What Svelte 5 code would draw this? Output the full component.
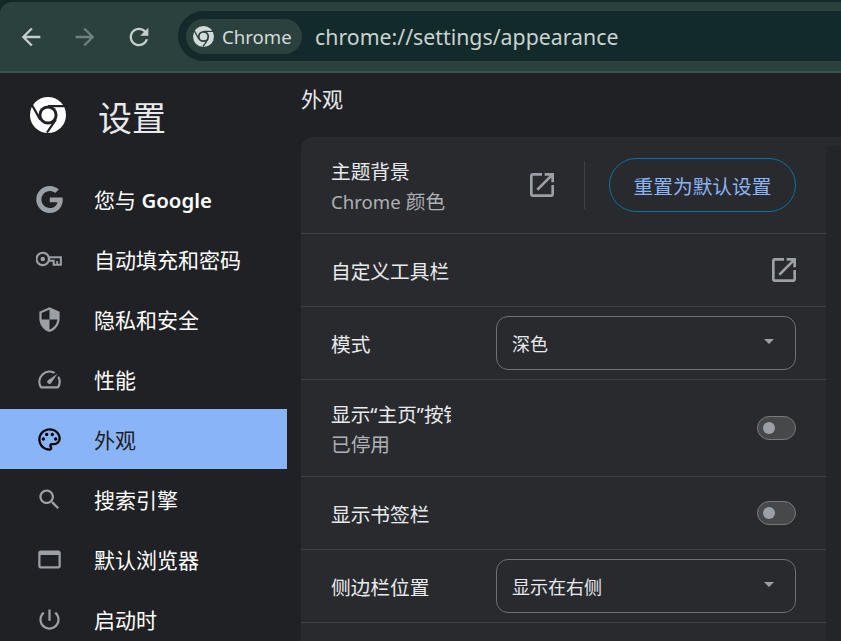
<script>
  const icons = {
    google: 'M12.24 10.285V14.4h6.806c-.275 1.765-2.056 5.174-6.806 5.174-4.095 0-7.439-3.389-7.439-7.574s3.345-7.574 7.439-7.574c2.33 0 3.891.989 4.785 1.849l3.254-3.138C18.189 1.186 15.479 0 12.24 0c-6.635 0-12 5.365-12 12s5.365 12 12 12c6.926 0 11.52-4.869 11.52-11.726 0-.788-.085-1.39-.189-1.989H12.24z',
    key: 'M6 5A6.5 6.5 0 0 1 12 9H23V17.5H14.8V14H12A6.5 6.5 0 1 1 6 5ZM6 6.9A4.6 4.6 0 1 0 6 16.1 4.6 4.6 0 1 0 6 6.9ZM6 9.5A2 2 0 1 1 6 13.5 2 2 0 1 1 6 9.5ZM12.6 10.8H21.2V15.7H19.6V13.4H18V15.7H16.6V12.2H12.6Z',
    shield: 'M12 1L3 5v6c0 5.55 3.84 10.74 9 12 5.16-1.26 9-6.45 9-12V5l-9-4zm0 10.99h7c-.53 4.12-3.28 7.79-7 8.94V12H5V6.3l7-3.11v8.8z',
    speed: 'M20.38 8.57l-1.23 1.85a8 8 0 0 1-.22 7.58H5.07A8 8 0 0 1 15.58 6.85l1.85-1.23A10 10 0 0 0 3.35 19a2 2 0 0 0 1.72 1h13.85a2 2 0 0 0 1.74-1 10 10 0 0 0-.27-10.44zm-9.79 6.84a2 2 0 0 0 2.83 0l5.66-8.49-8.49 5.66a2 2 0 0 0 0 2.83z',
    palette: 'M12 22C6.49 22 2 17.51 2 12S6.49 2 12 2s10 4.04 10 9c0 3.31-2.69 6-6 6h-1.77c-.28 0-.5.22-.5.5 0 .12.05.23.13.33.41.47.64 1.06.64 1.67 0 1.38-1.12 2.5-2.5 2.5zm0-18c-4.41 0-8 3.59-8 8s3.59 8 8 8c.28 0 .5-.22.5-.5a.54.54 0 0 0-.14-.35c-.41-.46-.63-1.05-.63-1.65 0-1.38 1.12-2.5 2.5-2.5H16c2.21 0 4-1.79 4-4 0-3.86-3.59-7-8-7zM6.5 10a1.5 1.5 0 1 0 0 3 1.5 1.5 0 0 0 0-3zm3-4a1.5 1.5 0 1 0 0 3 1.5 1.5 0 0 0 0-3zm5 0a1.5 1.5 0 1 0 0 3 1.5 1.5 0 0 0 0-3zm3 4a1.5 1.5 0 1 0 0 3 1.5 1.5 0 0 0 0-3z',
    search: 'M15.5 14h-.79l-.28-.27C15.41 12.59 16 11.11 16 9.5 16 5.91 13.09 3 9.5 3S3 5.91 3 9.5 5.91 16 9.5 16c1.61 0 3.09-.59 4.23-1.57l.27.28v.79l5 4.99L20.49 19l-4.99-5zm-6 0C7.01 14 5 11.99 5 9.5S7.01 5 9.5 5 14 7.01 14 9.5 11.99 14 9.5 14z',
    browser: 'M20 4H4c-1.11 0-2 .9-2 2v12c0 1.1.89 2 2 2h16c1.1 0 2-.9 2-2V6c0-1.1-.9-2-2-2zm0 14H4V8h16v10z',
    power: 'M13 3h-2v10h2V3zm4.83 2.17l-1.42 1.42C17.99 7.86 19 9.81 19 12c0 3.87-3.13 7-7 7s-7-3.13-7-7c0-2.19 1.01-4.14 2.58-5.42L6.17 5.17C4.23 6.82 3 9.26 3 12c0 4.97 4.03 9 9 9s9-4.03 9-9c0-2.74-1.23-5.18-3.17-6.83z'
  }
  const external = 'M19 19H5V5h7V3H5c-1.11 0-2 .9-2 2v14c0 1.1.89 2 2 2h14c1.1 0 2-.9 2-2v-7h-2v7zM14 3v2h3.59l-9.83 9.83 1.41 1.41L19 6.41V10h2V3h-7z'

  const nav = [
    { icon: 'google', html: '您与 <b>Google</b>' },
    { icon: 'key', html: '自动填充和密码' },
    { icon: 'shield', html: '隐私和安全' },
    { icon: 'speed', html: '性能' },
    { icon: 'palette', html: '外观', active: true },
    { icon: 'search', html: '搜索引擎' },
    { icon: 'browser', html: '默认浏览器' },
    { icon: 'power', html: '启动时' }
  ]
</script>

{#snippet chromeLogo(size, bg)}
  <svg width={size} height={size} viewBox="0 0 36 36">
    <circle cx="18" cy="18" r="18" fill="currentColor" />
    <circle cx="18" cy="18" r="9.6" fill={bg} />
    <circle cx="18" cy="18" r="6.6" fill="currentColor" />
    <path d="M18 9.2H34.5M10.2 22.6L2 8M25.8 22.6L17 35.5" stroke={bg} stroke-width="2.2" fill="none" />
  </svg>
{/snippet}

{#snippet externalIcon()}
  <svg width="32" height="32" viewBox="0 0 24 24" fill="#9aa0a6"><path d={external} /></svg>
{/snippet}

{#snippet dropdown(value)}
  <div class="select">
    <span>{value}</span>
    <i class="caret"></i>
  </div>
{/snippet}

{#snippet toggle()}
  <div class="toggle"><i></i></div>
{/snippet}

<div class="window">
  <header class="toolbar">
    <button class="tool" aria-label="back">
      <svg width="28" height="28" viewBox="0 0 24 24" fill="#c4cfcc"><path d="M20 11H7.83l5.59-5.59L12 4l-8 8 8 8 1.41-1.41L7.83 13H20v-2z" /></svg>
    </button>
    <button class="tool" aria-label="forward">
      <svg width="28" height="28" viewBox="0 0 24 24" fill="#6e817d"><path d="M4 11h12.17l-5.59-5.59L12 4l8 8-8 8-1.41-1.41L16.17 13H4v-2z" /></svg>
    </button>
    <button class="tool" aria-label="reload">
      <svg width="28" height="28" viewBox="0 0 24 24" fill="#c4cfcc"><path d="M17.65 6.35C16.2 4.9 14.21 4 12 4c-4.42 0-7.99 3.58-7.99 8s3.57 8 7.99 8c3.73 0 6.84-2.55 7.73-6h-2.08c-.82 2.33-3.04 4-5.65 4-3.31 0-6-2.69-6-6s2.69-6 6-6c1.66 0 3.14.69 4.22 1.78L13 11h7V4l-2.35 2.35z" /></svg>
    </button>
    <div class="omnibox">
      <div class="chip">
        <span class="chip-logo">{@render chromeLogo(21, '#2b413d')}</span>
        <span>Chrome</span>
      </div>
      <span class="url">chrome://settings/appearance</span>
    </div>
  </header>

  <div class="body">
    <aside class="sidebar">
      <div class="brand">
        <span class="brand-logo">{@render chromeLogo(36, '#202124')}</span>
        <h1>设置</h1>
      </div>
      <nav>
        {#each nav as item}
          <div class="nav-item" class:active={item.active}>
            <svg width="27" height="27" viewBox="0 0 24 24"><path fill-rule="evenodd" d={icons[item.icon]} /></svg>
            <span>{@html item.html}</span>
          </div>
        {/each}
      </nav>
    </aside>

    <main class="content">
      <h2>外观</h2>
      <section class="card">
        <div class="rows">
          <div class="row tall-a">
            <div class="label">
              <div>主题背景</div>
              <div class="sub"><span class="latin">Chrome</span> 颜色</div>
            </div>
            <div class="theme-actions">
              {@render externalIcon()}
              <div class="divider"></div>
              <button class="reset">重置为默认设置</button>
            </div>
          </div>
          <div class="row">
            <div class="label">自定义工具栏</div>
            {@render externalIcon()}
          </div>
          <div class="row">
            <div class="label">模式</div>
            {@render dropdown('深色')}
          </div>
          <div class="row tall-b">
            <div class="label clipped">
              <div>显示“主页”按钮</div>
              <div class="sub">已停用</div>
            </div>
            {@render toggle()}
          </div>
          <div class="row">
            <div class="label">显示书签栏</div>
            {@render toggle()}
          </div>
          <div class="row">
            <div class="label">侧边栏位置</div>
            {@render dropdown('显示在右侧')}
          </div>
        </div>
        <div class="strip"></div>
      </section>
    </main>
  </div>
</div>

<style>
  :global(body) {
    margin: 0;
    background: #202124;
    overflow: hidden;
  }

  .window {
    width: 841px;
    height: 641px;
    overflow: hidden;
    display: flex;
    flex-direction: column;
    background: #112a27;
    font-family: "Noto Sans", "Noto Sans CJK SC", sans-serif;
    font-size: 21px;
    color: #e8eaed;
  }

  .toolbar {
    box-sizing: border-box;
    height: 71px;
    margin-top: 2px;
    flex: none;
    display: flex;
    align-items: center;
    padding: 0 0 0 13px;
    background: #2b413d;
    border-top-left-radius: 12px;
    border-bottom: 2px solid #3d514d;
  }

  .tool {
    width: 36px;
    height: 36px;
    margin-right: 18px;
    padding: 0;
    display: flex;
    align-items: center;
    justify-content: center;
    background: none;
    border: none;
  }

  .tool:nth-child(3) {
    margin-right: 21px;
  }

  .omnibox {
    flex: 1;
    height: 50px;
    margin-bottom: 1px;
    display: flex;
    align-items: center;
    gap: 13px;
    padding-left: 8px;
    background: #122a29;
    border-radius: 25px 0 0 25px;
  }

  .chip {
    height: 35px;
    width: 116px;
    box-sizing: border-box;
    display: flex;
    align-items: center;
    gap: 8px;
    padding-left: 7px;
    background: #2b413d;
    border-radius: 18px;
    font-size: 18.6px;
    color: #d3dbd9;
  }

  .chip-logo {
    display: flex;
    color: #d3dbd9;
  }

  .url {
    font-size: 21.3px;
    color: #c9d3d1;
    white-space: nowrap;
  }

  .body {
    flex: 1;
    display: flex;
    background: #202124;
    min-height: 0;
  }

  .sidebar {
    width: 287px;
    flex: none;
  }

  .brand {
    height: 96px;
    box-sizing: border-box;
    display: flex;
    align-items: center;
    padding: 0 0 12px 30px;
    gap: 32px;
  }

  .brand-logo {
    display: flex;
    color: #fff;
  }

  h1 {
    margin: 6px 0 0;
    font-size: 34px;
    line-height: 40px;
    font-weight: 400;
    color: #e8eaed;
  }

  .nav-item {
    height: 60px;
    display: flex;
    align-items: center;
    padding-left: 36px;
    gap: 31px;
    color: #fff;
  }

  .nav-item svg {
    fill: #9aa0a6;
    flex: none;
  }

  .nav-item :global(b) {
    font-weight: 600;
    font-size: 20.4px;
  }

  .nav-item.active {
    background: #8ab4f8;
    color: #202124;
  }

  .nav-item.active svg {
    fill: #000;
  }

  .content {
    flex: 1;
    min-width: 0;
    padding-left: 14px;
  }

  h2 {
    margin: 0;
    height: 64px;
    box-sizing: border-box;
    padding-top: 11px;
    font-size: 21px;
    line-height: 30px;
    font-weight: 400;
    color: #e8eaed;
  }

  .card {
    display: flex;
    height: 520px;
    background: #292a2d;
    border-top-left-radius: 12px;
  }

  .rows {
    width: 525px;
    flex: none;
  }

  .strip {
    flex: 1;
    margin-top: 9px;
    background: #242528;
  }

  .row {
    box-sizing: border-box;
    height: 73px;
    display: flex;
    align-items: center;
    justify-content: space-between;
    padding: 0 30px;
    border-bottom: 1px solid #3f4043;
    font-size: 19.7px;
  }

  .row > svg {
    margin-right: -4px;
  }

  .row.tall-a,
  .row.tall-b {
    height: 97px;
  }

  .label {
    padding-top: 3px;
    line-height: 30px;
    color: #e8eaed;
    white-space: nowrap;
  }

  .sub {
    color: #adb1b6;
  }

  .latin {
    font-size: 18.6px;
  }

  .clipped {
    width: 120px;
    overflow: hidden;
  }

  .theme-actions {
    display: flex;
    align-items: center;
  }

  .divider {
    width: 1px;
    height: 48px;
    margin: 0 24px 0 26px;
    background: #3f4043;
  }

  .reset {
    width: 187px;
    height: 54px;
    padding: 0;
    border: 1px solid #0e6fa8;
    border-radius: 27px;
    background: none;
    font: inherit;
    font-size: 19.7px;
    color: #8ab4f8;
  }

  .select {
    box-sizing: border-box;
    width: 300px;
    height: 54px;
    display: flex;
    align-items: center;
    justify-content: space-between;
    padding: 0 21px 0 15px;
    border: 1px solid #6f7074;
    border-radius: 12px;
    font-size: 18px;
    color: #e8eaed;
  }

  .caret {
    width: 0;
    height: 0;
    margin-bottom: 3px;
    border-left: 5px solid transparent;
    border-right: 5px solid transparent;
    border-top: 5px solid #9aa0a6;
  }

  .toggle {
    box-sizing: border-box;
    width: 39px;
    height: 24px;
    display: flex;
    align-items: center;
    padding-left: 5px;
    background: #47484a;
    border: 1px solid #76777a;
    border-radius: 12px;
  }

  .toggle i {
    width: 12px;
    height: 12px;
    border-radius: 50%;
    background: #9aa0a6;
  }
</style>
